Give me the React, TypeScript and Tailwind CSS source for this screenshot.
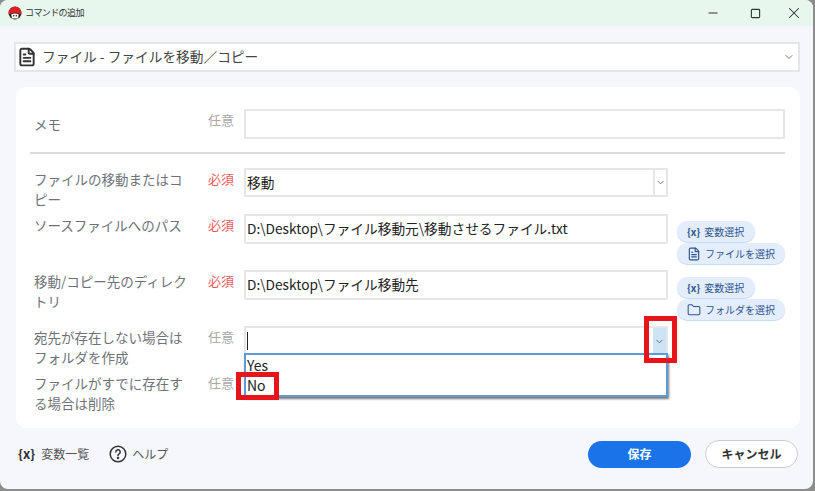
import { ChevronDown, Minus, Square, X, FileText, Folder } from "lucide-react";
import type { ReactNode } from "react";

const FONT = "font-['Noto_Sans_CJK_JP','Noto_Sans',sans-serif]";

const ChipButton = ({ icon, label, wide }: { icon: ReactNode; label: string; wide?: boolean }) => (
  <div
    className={`flex h-[21px] items-center rounded-full bg-[#e3edfb] pl-[10px] text-[10px] text-[#2d5590] shadow-[0_1px_1px_#c8d8f0] ${
      wide ? "w-[108px] gap-[4px]" : "w-[78px] gap-[4px]"
    }`}
  >
    {icon}
    <span>{label}</span>
  </div>
);

const VarIcon = () => <span className="text-[10px] font-bold leading-none text-[#2d5590]">{"{x}"}</span>;

const Row = ({
  label,
  required,
  children,
  className,
}: {
  label: ReactNode;
  required?: boolean;
  children?: ReactNode;
  className?: string;
}) => (
  <div className={`flex items-start ${className ?? ""}`}>
    <div className="w-[178px] pl-[4px] pr-[19px] pt-[1px] text-[13.5px] leading-[20px] text-[#6e7278]">{label}</div>
    <div className={`w-[36px] pt-[1px] text-[13px] leading-[20px] ${required ? "text-[#f0595c]" : "text-[#a8a8a8]"}`}>
      {required ? "必須" : "任意"}
    </div>
    {children}
  </div>
);

const Field = ({ value }: { value: string }) => (
  <div className="flex h-[30px] w-[424px] items-center border-2 border-[#e6e6e6] bg-white px-[1px] pb-[1px] text-[13.7px] text-[#222]">
    {value}
  </div>
);

const App = () => {
  return (
    <div className={`relative h-[491px] w-[815px] overflow-hidden bg-[#8d8d8d] ${FONT}`}>
      <div className="flex h-[489px] w-[813px] flex-col overflow-hidden rounded-[8px] bg-[#f6f7fc]">
        {/* title bar */}
        <div className="flex h-[26px] shrink-0 items-center bg-[#e8f7ee] pl-[8px]">
          <svg width="14" height="14" viewBox="0 0 14 14">
            <circle cx="7" cy="7" r="6.5" fill="#2a1a1a" />
            <path d="M.8 7a6.2 6.2 0 0 1 12.4 0c0 1-.6 1.600-1.600 1.200C10.500 7.500 9 6.800 7 6.800s-3.500.7-4.600 1.400C1.400 8.600.8 8 .8 7z" fill="#e01f1f" />
            <path d="M3.200 8.600C4.200 7.900 5.500 7.500 7 7.500s2.800.4 3.800 1.100L10 12.500H4z" fill="#fff" />
            <circle cx="5.700" cy="9.800" r="0.8" fill="#222" />
            <circle cx="8.300" cy="9.800" r="0.8" fill="#222" />
          </svg>
          <span className="ml-[3px] text-[9px] tracking-[-0.6px] text-[#333]">コマンドの追加</span>
          <div className="ml-auto flex items-center pr-[10px] text-[#333]">
            <Minus size={14} strokeWidth={2} />
            <Square size={11} strokeWidth={2.4} className="ml-[30px]" />
            <X size={18} strokeWidth={1.4} className="ml-[24px]" />
          </div>
        </div>

        <div className="flex-1 pl-[15px]">
          {/* command select */}
          <div className="-ml-px mt-[16px] flex h-[30px] w-[786px] items-center border-2 border-[#e6e6ea] bg-white pl-[1px] pr-[2px]">
            <FileText size={20} strokeWidth={2.3} className="text-[#333]" />
            <span className="ml-[5px] pb-[1px] text-[13.7px] text-[#444]">ファイル - ファイルを移動／コピー</span>
            <ChevronDown size={12} className="ml-auto mr-[1px] text-[#777]" />
          </div>

          {/* form card */}
          <div className="relative ml-px mt-[15px] h-[341px] w-[784px] rounded-[10px] bg-white pl-[14px] pt-[22px]">
            <Row className="h-[30px]" label={<div className="pt-[4px]">メモ</div>}>
              <div className="h-[30px] w-[541px] border-2 border-[#e6e6e6] bg-white" />
            </Row>
            <div className="mt-[13px] h-[2px] w-[755px] bg-[#dcdcdc]" />

            <Row required className="mt-[14px] h-[46px]" label="ファイルの移動またはコピー">
              <div className="flex h-[29px] w-[424px] items-center border-2 border-[#e6e6e6] pl-[1px] text-[13.7px] text-[#222]">
                <span className="pb-[1px]">移動</span>
                <div className="ml-auto flex h-full w-[13px] items-center justify-center border-l-2 border-[#e6e6e6]">
                  <ChevronDown size={11} className="text-[#777]" />
                </div>
              </div>
            </Row>

            <Row required className="h-[56px]" label="ソースファイルへのパス">
              <Field value="D:\Desktop\ファイル移動元\移動させるファイル.txt" />
              <div className="ml-[9px] mt-[7px] flex flex-col items-start gap-[1px]">
                <ChipButton icon={<VarIcon />} label="変数選択" />
                <ChipButton wide icon={<FileText size={14} strokeWidth={2} />} label="ファイルを選択" />
              </div>
            </Row>

            <Row required className="h-[56px]" label="移動/コピー先のディレクトリ">
              <Field value="D:\Desktop\ファイル移動先" />
              <div className="ml-[9px] mt-[7px] flex flex-col items-start gap-[1px]">
                <ChipButton icon={<VarIcon />} label="変数選択" />
                <ChipButton wide icon={<Folder size={14} strokeWidth={1.8} />} label="フォルダを選択" />
              </div>
            </Row>

            <Row className="h-[46px]" label="宛先が存在しない場合はフォルダを作成">
              <div className="flex h-[28px] w-[424px] items-center border-2 border-b-0 border-[#e6e6e6] pl-[1px]">
                <div className="h-[18px] w-[1px] bg-[#222]" />
                <div className="ml-auto flex h-full w-[13px] items-center justify-center bg-[#cde3f6]">
                  <ChevronDown size={11} className="text-[#666]" />
                </div>
              </div>
            </Row>

            <Row label="ファイルがすでに存在する場合は削除" />

            {/* dropdown list */}
            <div className="absolute left-[228px] top-[266px] h-[44px] w-[424px] border-2 border-[#5a9bd8] bg-white pl-[1px] text-[14px] leading-[20px] text-[#222] shadow-[1px_2px_2px_#777]">
              <div>Yes</div>
              <div>No</div>
            </div>

            {/* annotation boxes */}
            <div className="absolute left-[628px] top-[229px] h-[47px] w-[33px] border-[5px] border-[#e8141c]" />
            <div className="absolute left-[220px] top-[285px] h-[28px] w-[43px] border-[5px] border-[#e8141c]" />
          </div>

          {/* footer */}
          <div className="flex h-[52px] w-[785px] items-center">
            <span className="ml-[3px] text-[13px] font-bold text-[#333]">{"{x}"}</span>
            <span className="ml-[6px] text-[12px] text-[#555]">変数一覧</span>
            <svg className="ml-[20px]" width="18" height="18" viewBox="0 0 18 18" fill="none" stroke="#333" strokeWidth="1.5">
              <circle cx="9" cy="9" r="7.8" />
              <path d="M6.800 7a2.200 2.200 0 1 1 3.300 1.900c-.7.4-1.100.8-1.100 1.700" strokeLinecap="round" />
              <circle cx="9" cy="13" r="0.5" fill="#333" />
            </svg>
            <span className="ml-[5px] text-[12px] text-[#555]">ヘルプ</span>
            <div className="ml-auto flex items-center gap-[14px] pr-[2px]">
              <div className="flex h-[27px] w-[103px] items-center justify-center rounded-full bg-[#1a73e8] text-[12px] font-bold text-white">
                保存
              </div>
              <div className="flex h-[28px] w-[93px] items-center justify-center rounded-full border border-[#ccc] bg-white text-[12px] font-bold text-[#333]">
                キャンセル
              </div>
            </div>
          </div>
        </div>
      </div>
    </div>
  );
};

export default App;
